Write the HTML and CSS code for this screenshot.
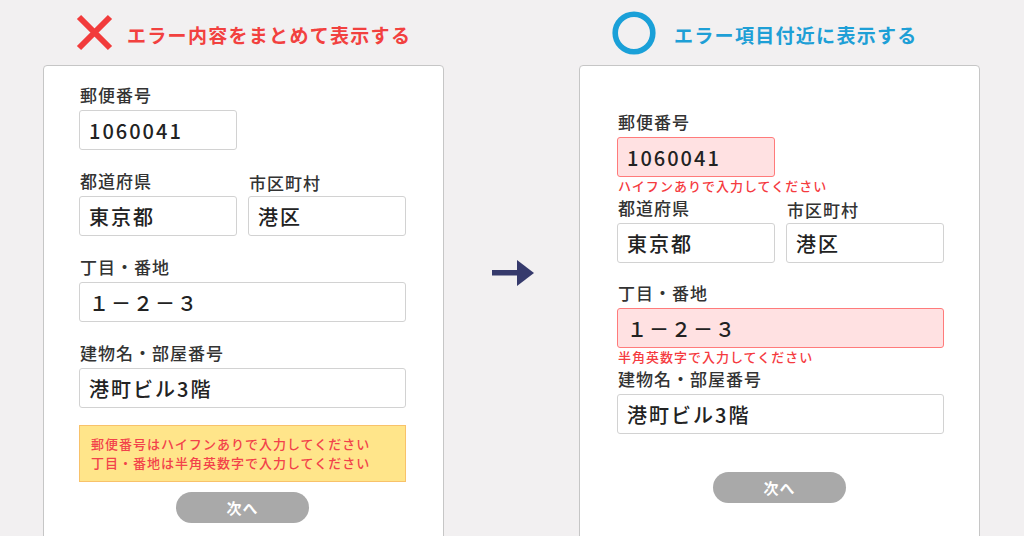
FILE: index.html
```html
<!DOCTYPE html>
<html lang="ja">
<head>
<meta charset="utf-8">
<link rel="stylesheet" href="styles.css">
</head>
<body>
<div class="page">
  <section class="col">
    <h2 class="head head-bad">
      <svg class="icon-x" width="37" height="37" viewBox="0 0 37 37"><path d="M3 3 L34 34 M34 3 L3 34" stroke="#f23b3b" stroke-width="6" fill="none"/></svg>
      <span>エラー内容をまとめて表示する</span>
    </h2>
    <div class="panel panel-left">
      <div class="group">
        <div class="label">郵便番号</div>
        <div class="input half">1060041</div>
      </div>
      <div class="group row">
        <div class="half">
          <div class="label">都道府県</div>
          <div class="input">東京都</div>
        </div>
        <div class="half shifted">
          <div class="label">市区町村</div>
          <div class="input">港区</div>
        </div>
      </div>
      <div class="group">
        <div class="label">丁目・番地</div>
        <div class="input wide">１－２－３</div>
      </div>
      <div class="group">
        <div class="label">建物名・部屋番号</div>
        <div class="input">港町ビル3階</div>
      </div>
      <div class="notice">
        <p>郵便番号はハイフンありで入力してください</p>
        <p>丁目・番地は半角英数字で入力してください</p>
      </div>
      <div class="btn btn-left">次へ</div>
    </div>
  </section>

  <div class="arrow">
    <svg width="42" height="27" viewBox="0 0 42 27"><rect x="0" y="10" width="26" height="5.5" fill="#363a6c"/><path d="M25 0 L42 13 L25 26 Z" fill="#363a6c"/></svg>
  </div>

  <section class="col">
    <h2 class="head head-good">
      <svg class="icon-o" width="44" height="44" viewBox="0 0 44 44"><circle cx="22" cy="22" r="18.8" stroke="#1aa0d8" stroke-width="5.6" fill="none"/></svg>
      <span>エラー項目付近に表示する</span>
    </h2>
    <div class="panel panel-right">
      <div class="group">
        <div class="label">郵便番号</div>
        <div class="input half error">1060041</div>
        <div class="err-msg">ハイフンありで入力してください</div>
      </div>
      <div class="group row tight">
        <div class="half">
          <div class="label">都道府県</div>
          <div class="input">東京都</div>
        </div>
        <div class="half shifted">
          <div class="label">市区町村</div>
          <div class="input">港区</div>
        </div>
      </div>
      <div class="group">
        <div class="label">丁目・番地</div>
        <div class="input wide error">１－２－３</div>
        <div class="err-msg">半角英数字で入力してください</div>
      </div>
      <div class="group tight">
        <div class="label">建物名・部屋番号</div>
        <div class="input">港町ビル3階</div>
      </div>
      <div class="btn btn-right">次へ</div>
    </div>
  </section>
</div>
</body>
</html>
```

FILE: styles.css
```css
html, body {
  margin: 0;
  padding: 0;
}
body {
  width: 1024px;
  height: 536px;
  overflow: hidden;
  background: #f2f0f1;
  font-family: "Noto Sans CJK JP", "Noto Sans", sans-serif;
  color: #333;
}
.page {
  display: flex;
  padding-left: 43px;
}
.col {
  width: 401px;
  flex: none;
}
.head {
  margin: 0;
  height: 65px;
  display: flex;
  align-items: center;
  padding-left: 33px;
  font-size: 19px;
  font-weight: 700;
  letter-spacing: 1.3px;
}
.head-bad {
  color: #f2413f;
  gap: 14px;
}
.head-bad span {
  margin-top: 3px;
}
.head-good {
  color: #1e9fd6;
  gap: 18px;
}
.head-good span {
  margin-top: 3px;
}
.icon-x, .icon-o {
  flex: none;
}
.panel {
  background: #fff;
  border: 1px solid #c6c6c6;
  border-radius: 4px;
  height: 490px;
  box-sizing: border-box;
}
.panel-left {
  padding: 17px 0 0 35px;
}
.panel-right {
  padding: 44px 0 0 37px;
}
.group {
  width: 327px;
}
.panel-left .group + .group {
  margin-top: 19px;
}
.panel-right .group + .group {
  margin-top: 18px;
}
.panel-right .group.tight {
  margin-top: 2px;
}
.row {
  display: flex;
  gap: 11px;
}
.half {
  width: 158px;
}
.label {
  font-size: 17px;
  line-height: 24px;
  letter-spacing: 1px;
  font-weight: 500;
  padding-left: 1px;
  margin-bottom: 3px;
  color: #333;
}
.shifted .label {
  padding-top: 2px;
  margin-bottom: 1px;
}
.input {
  height: 40px;
  box-sizing: border-box;
  border: 1px solid #d2d2d2;
  border-radius: 3px;
  padding-left: 9px;
  display: flex;
  align-items: center;
  font-size: 20px;
  font-weight: 500;
  letter-spacing: 2px;
  color: #222;
  background: #fff;
}
.input.error {
  background: #ffe1e2;
  border-color: #ff7b7b;
}
.err-msg {
  font-size: 13px;
  line-height: 16px;
  letter-spacing: 1px;
  font-weight: 500;
  color: #f53b3f;
  margin-top: 1px;
  padding-left: 1px;
}
.notice {
  width: 327px;
  box-sizing: border-box;
  height: 57px;
  margin-top: 17px;
  background: #ffe58a;
  border: 1px solid #f8c26a;
  padding: 8px 11px;
  color: #f2424a;
  font-size: 13px;
  font-weight: 500;
  line-height: 19px;
  letter-spacing: 1px;
}
.notice p {
  margin: 0;
}
.btn {
  width: 133px;
  height: 31px;
  border-radius: 16px;
  background: #a9a9a9;
  color: #fff;
  font-size: 15px;
  font-weight: 700;
  display: flex;
  align-items: center;
  justify-content: center;
  letter-spacing: 1px;
}
.btn-left {
  margin: 10px 0 0 97px;
}
.btn-right {
  margin: 38px 0 0 96px;
}
.arrow {
  width: 135px;
  flex: none;
  box-sizing: border-box;
  padding: 260px 0 0 48px;
}
.arrow svg {
  display: block;
}
```
